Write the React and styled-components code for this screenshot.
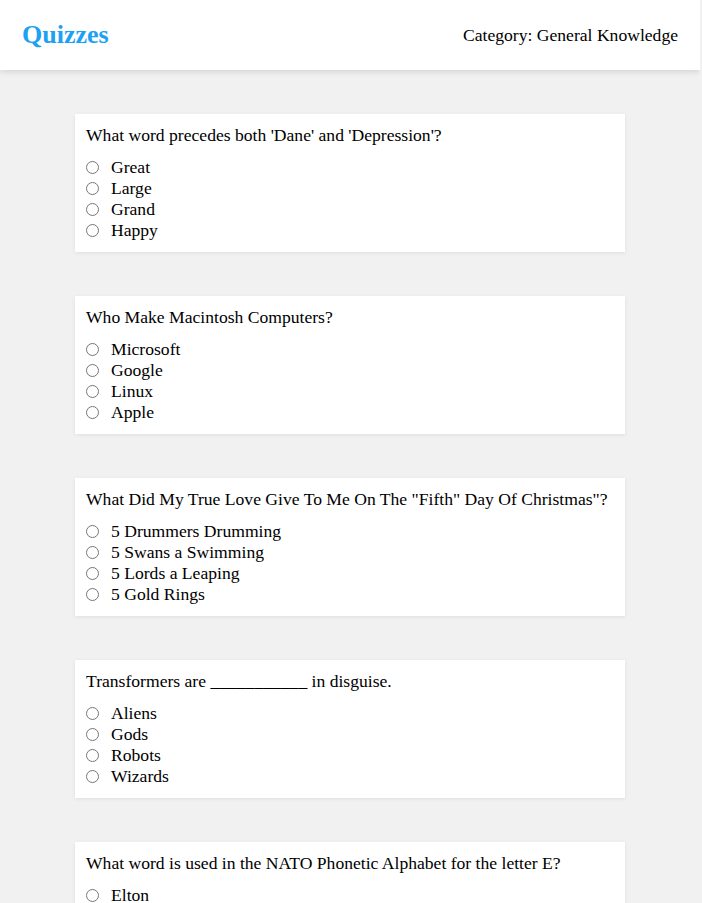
import React from "react";
import styled, { createGlobalStyle } from "styled-components";

const Global = createGlobalStyle`
  html, body { padding: 0; }
  html { margin: 0; }
  body {
    margin: 0 2px 0 0;
    background: #f1f1f1;
    font-family: "Liberation Serif", "Times New Roman", serif;
    color: #000;
  }
`;

const Header = styled.header`
  display: flex;
  align-items: center;
  justify-content: space-between;
  height: 70px;
  padding: 0 22px 0 22px;
  background: #fff;
  box-shadow: 0 2px 6px rgba(0, 0, 0, 0.12);
  box-sizing: border-box;
`;

const Title = styled.h1`
  margin: 0;
  font-size: 26px;
  font-weight: bold;
  color: #1da1f2;
`;

const Category = styled.div`
  font-size: 17.6px;
`;

const List = styled.main`
  display: flex;
  flex-direction: column;
  align-items: center;
  gap: 44px;
  padding: 44px 0 44px;
`;

const Card = styled.section`
  width: 550px;
  box-sizing: border-box;
  background: #fff;
  padding: 10px 11px 11px;
  box-shadow: 0 1px 4px rgba(0, 0, 0, 0.08);
`;

const Question = styled.p`
  margin: 0 0 11px;
  font-size: 17.6px;
  line-height: 22px;
`;

const Option = styled.label`
  display: flex;
  align-items: center;
  gap: 12px;
  height: 21px;
  font-size: 17.6px;
`;

const Radio = styled.input`
  margin: 0;
  width: 13px;
  height: 13px;
`;

const quizzes = [
  {
    q: "What word precedes both 'Dane' and 'Depression'?",
    options: ["Great", "Large", "Grand", "Happy"],
  },
  {
    q: "Who Make Macintosh Computers?",
    options: ["Microsoft", "Google", "Linux", "Apple"],
  },
  {
    q: 'What Did My True Love Give To Me On The "Fifth" Day Of Christmas"?',
    options: ["5 Drummers Drumming", "5 Swans a Swimming", "5 Lords a Leaping", "5 Gold Rings"],
  },
  {
    q: "Transformers are ___________ in disguise.",
    options: ["Aliens", "Gods", "Robots", "Wizards"],
  },
  {
    q: "What word is used in the NATO Phonetic Alphabet for the letter E?",
    options: ["Elton", "Echo", "Edward", "Egg"],
  },
];

export default function App() {
  return (
    <>
      <Global />
      <Header>
        <Title>Quizzes</Title>
        <Category>Category: General Knowledge</Category>
      </Header>
      <List>
        {quizzes.map((item, i) => (
          <Card key={i}>
            <Question>{item.q}</Question>
            {item.options.map((o) => (
              <Option key={o}>
                <Radio type="radio" name={`q${i}`} value={o} />
                {o}
              </Option>
            ))}
          </Card>
        ))}
      </List>
    </>
  );
}
